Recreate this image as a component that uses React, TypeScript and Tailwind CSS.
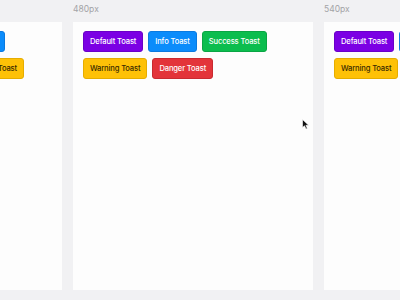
import React from 'react';

type Variant = 'default' | 'info' | 'success' | 'warning' | 'danger';

const styles: Record<Variant, string> = {
  default: 'bg-[#7b00e4] border-[#6a00c8] text-white',
  info: 'bg-[#0b8cfb] border-[#0a7ae0] text-white',
  success: 'bg-[#0bbd4e] border-[#0aa544] text-white',
  warning: 'bg-[#fec107] border-[#e6ad00] text-[#3a2a00]',
  danger: 'bg-[#e3343a] border-[#c92a30] text-white',
};

const ToastButton: React.FC<{ variant: Variant; children: React.ReactNode }> = ({ variant, children }) => (
  <button
    className={`h-[21px] shrink-0 whitespace-nowrap rounded-[3px] border px-[6px] text-[7.6px] font-medium tracking-[-0.15px] leading-none ${styles[variant]}`}
  >
    {children}
  </button>
);

const Buttons = () => (
  <div className="flex flex-wrap gap-x-[5px] gap-y-[6px]">
    <ToastButton variant="default">Default Toast</ToastButton>
    <ToastButton variant="info">Info Toast</ToastButton>
    <ToastButton variant="success">Success Toast</ToastButton>
    <ToastButton variant="warning">Warning Toast</ToastButton>
    <ToastButton variant="danger">Danger Toast</ToastButton>
  </div>
);

const Label = ({ text }: { text?: string }) => (
  <div className="flex h-[22px] items-center pb-[4px] text-[8.5px] text-[#a3a3a6]">{text}</div>
);

export default function App() {
  return (
    <div
      className="relative flex h-[300px] w-[400px] gap-[11px] overflow-hidden bg-[#f1f1f3]"
      style={{ fontFamily: 'Inter, "Noto Sans", sans-serif' }}
    >
      {/* previous breakpoint, cut off on the left */}
      <div className="flex w-[62px] shrink-0 flex-col">
        <Label />
        <div className="flex h-[268px] flex-col items-end gap-y-[6px] overflow-hidden bg-[#fdfdfd] pt-[9px]">
          <div className="mr-[57px] flex">
            <ToastButton variant="info">Info Toast</ToastButton>
          </div>
          <div className="mr-[38px] flex">
            <ToastButton variant="warning">Warning Toast</ToastButton>
          </div>
        </div>
      </div>

      <div className="flex w-[240px] shrink-0 flex-col">
        <Label text="480px" />
        <div className="h-[268px] bg-[#fdfdfd] px-[10px] pt-[9px]">
          <Buttons />
        </div>
      </div>

      <div className="flex w-[270px] shrink-0 flex-col">
        <Label text="540px" />
        <div className="h-[268px] bg-[#fdfdfd] px-[10px] pt-[9px]">
          <Buttons />
        </div>
      </div>

      {/* mouse pointer */}
      <svg className="absolute left-[302px] top-[119px]" width="8" height="11" viewBox="0 0 8 11">
        <path d="M0.5 0.5 L0.5 8.5 L2.5 6.8 L4 10 L5.3 9.4 L3.9 6.3 L6.6 6.2 Z" fill="#111" stroke="#fff" strokeWidth="0.6" />
      </svg>
    </div>
  );
}
